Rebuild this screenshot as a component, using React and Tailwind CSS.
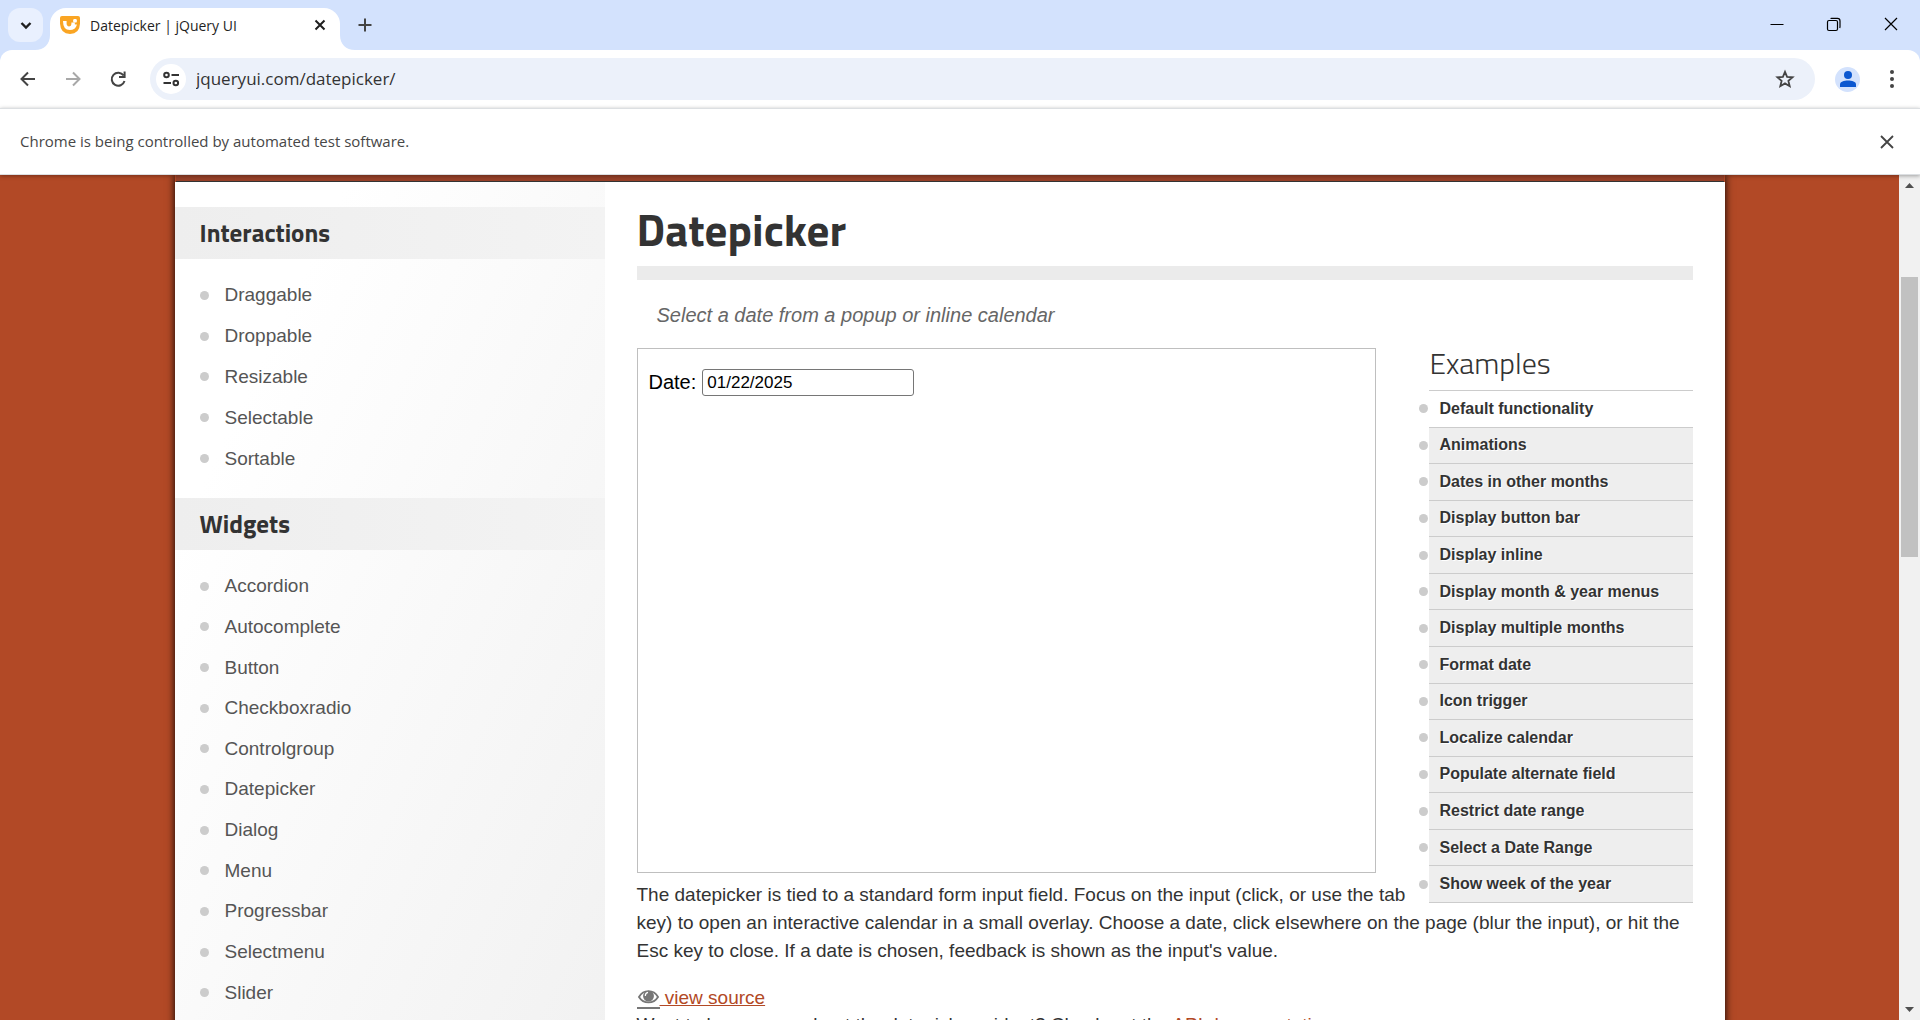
import React from "react";

const INTERACTIONS = ["Draggable", "Droppable", "Resizable", "Selectable", "Sortable"];
const WIDGETS = [
  "Accordion", "Autocomplete", "Button", "Checkboxradio", "Controlgroup", "Datepicker",
  "Dialog", "Menu", "Progressbar", "Selectmenu", "Slider",
];
const EXAMPLES = [
  "Default functionality", "Animations", "Dates in other months", "Display button bar",
  "Display inline", "Display month & year menus", "Display multiple months", "Format date",
  "Icon trigger", "Localize calendar", "Populate alternate field", "Restrict date range",
  "Select a Date Range", "Show week of the year",
];

function Stroke({ d, className = "", size = 20, width = 2 }) {
  return (
    <svg className={className} width={size} height={size} viewBox={`0 0 ${size} ${size}`} fill="none" stroke="currentColor" strokeWidth={width} aria-hidden="true">
      <path d={d} />
    </svg>
  );
}

function TabStrip() {
  return (
    <div className="flex h-[50px] items-start bg-[#d3e2fd]">
      <button aria-label="Search tabs" className="mt-2 ml-2 flex h-[34px] w-[35px] items-center justify-center rounded-xl bg-[#e9f0fe] text-[#1f1f1f]">
        <Stroke d="M5.5 8l4.500 4.500L14.500 8" width={2.4} />
      </button>
      <div className="ml-[-8px] flex h-[50px] items-end">
        <svg width="15" height="15" viewBox="0 0 15 15" fill="#fff" aria-hidden="true"><path d="M15 0v15H0C9 15 15 9 15 0z" /></svg>
        <div className="mt-2 flex h-[42px] w-[290px] items-center self-start rounded-t-2xl bg-white pr-[10px] pb-2 pl-[10px]">
          <svg width="20" height="18" viewBox="0 0 20 18" aria-hidden="true">
            <path d="M0 2Q0 0 2 0h16q2 0 2 2v5.500Q19.500 18 10 18T0 7.500z" fill="#faa523" />
            <path d="M3 5h3.600v2.600q0 2.800 2.500 2.800 2.300 0 2.300-2.400V6.500h3.400v1.700q1 .6 2.200.3-1.500 5.600-7.200 5.600Q3 14 3 5z" fill="#fff" />
            <rect x="13.200" y="3" width="3.600" height="3.600" rx="1.200" fill="#fff" />
          </svg>
          <span className="ml-[10px] flex-1 font-['Open_Sans',sans-serif] text-[14px] text-[#1f1f1f]">Datepicker | jQuery UI</span>
          <button aria-label="Close tab" className="text-[#1f1f1f]"><Stroke d="M5.500 5.500l9 9M14.500 5.500l-9 9" /></button>
        </div>
        <svg width="15" height="15" viewBox="0 0 15 15" fill="#fff" aria-hidden="true"><path d="M0 0v15h15C6 15 0 9 0 0z" /></svg>
      </div>
      <button aria-label="New tab" className="mt-[15px] text-[#444]"><Stroke d="M10 3.500v13M3.500 10h13" /></button>
      <div className="mt-[14px] mr-[19px] ml-auto flex gap-[37px] text-black">
        <button aria-label="Minimize"><Stroke d="M3.500 10.500h13" width={1} /></button>
        <button aria-label="Restore">
          <svg width="20" height="20" viewBox="0 0 20 20" fill="none" stroke="currentColor" strokeWidth="1.200" aria-hidden="true">
            <rect x="3.500" y="6.500" width="10" height="10" rx="1.500" />
            <path d="M6.500 4.500q.3-.1 1-.1h6q2.500 0 2.500 2.500v5.600q0 1-.3 1.500" />
          </svg>
        </button>
        <button aria-label="Close window"><Stroke d="M4 4l12 12M16 4L4 16" width={1.2} /></button>
      </div>
    </div>
  );
}

function Toolbar() {
  return (
    <div className="bg-[#d3e2fd]">
      <div className="flex h-[58px] items-center rounded-t-xl bg-white pr-[18px] pl-[18px] text-[#444]">
        <button aria-label="Back"><Stroke d="M17 10H4M10 3.500L3.500 10l6.500 6.500" /></button>
        <button aria-label="Forward" className="ml-[25px] text-[#a8a8a8]"><Stroke d="M3 10h13M10 3.500l6.500 6.500-6.500 6.500" /></button>
        <button aria-label="Reload" className="ml-[25px]"><Stroke d="M15.600 6.500A6.500 6.500 0 1 0 16.500 12M16.600 2.500v5.500H11" /></button>
        <div className="ml-[22px] flex h-[42px] flex-1 items-center rounded-full bg-[#ecf1fa] pr-5 pl-[6px]">
          <button aria-label="View site information" className="flex h-[30px] w-[30px] items-center justify-center rounded-full bg-white text-[#333]">
            <svg width="18" height="18" viewBox="0 0 18 18" fill="none" stroke="currentColor" strokeWidth="2" aria-hidden="true">
              <circle cx="4.500" cy="5" r="2.300" /><path d="M9.500 5H17M1.500 13H9" /><circle cx="13.800" cy="13" r="2.300" />
            </svg>
          </button>
          <input aria-label="Address and search bar" defaultValue="jqueryui.com/datepicker/" className="ml-[10px] min-w-0 flex-1 bg-transparent font-['Open_Sans',sans-serif] text-[17px] text-[#333] outline-none" />
          <button aria-label="Bookmark this tab">
            <svg width="20" height="20" viewBox="0 0 20 20" fill="none" stroke="currentColor" strokeWidth="1.800" aria-hidden="true">
              <path d="M10 2.800l2.100 5 5.500.5-4.200 3.600 1.300 5.300-4.700-2.800-4.700 2.800 1.300-5.300L2.400 8.300l5.500-.5z" />
            </svg>
          </button>
        </div>
        <button aria-label="Profile" className="ml-5 flex h-[25px] w-[25px] items-center justify-center rounded-full bg-[#d3e2fd]">
          <svg width="16" height="16" viewBox="0 0 16 16" fill="#0b57d0" aria-hidden="true"><circle cx="8" cy="4" r="4" /><path d="M0 16v-2.500C0 10.500 4 9.500 8 9.500s8 1 8 4V16z" /></svg>
        </button>
        <button aria-label="Menu" className="ml-[22px]">
          <svg width="20" height="20" viewBox="0 0 20 20" fill="currentColor" aria-hidden="true"><circle cx="10" cy="3" r="2" /><circle cx="10" cy="10" r="2" /><circle cx="10" cy="17" r="2" /></svg>
        </button>
      </div>
    </div>
  );
}

function InfoBar() {
  return (
    <div className="z-10 flex h-[67px] items-center justify-between border-y border-[#dcdfe2] bg-white pr-[23px] pl-5 shadow-[0_1px_4px_rgba(0,0,0,0.35)]">
      <p className="font-['Open_Sans',sans-serif] text-[15px] text-[#474747]">Chrome is being controlled by automated test software.</p>
      <button aria-label="Dismiss" className="text-[#444]"><Stroke d="M4 4l12 12M16 4L4 16" width={1.8} /></button>
    </div>
  );
}

function SideSection({ title, items, listClass }) {
  return (
    <section>
      <h3 className="flex h-[52px] items-center bg-linear-to-r from-[#eee] to-[#f3f3f3] pt-[2px] pl-[25px] font-['Titillium_Web','Roboto',sans-serif] text-[25px] font-bold text-[#333]">{title}</h3>
      <ul className={`grid auto-rows-fr pt-4 pl-[25px] ${listClass}`}>
        {items.map((t) => (
          <li key={t} className="flex items-center">
            <span className="h-[9px] w-[9px] rounded-full bg-[#ccc]" />
            <a href="#" className="ml-4 text-[19px] leading-6 text-[#555]">{t}</a>
          </li>
        ))}
      </ul>
    </section>
  );
}

function Examples() {
  return (
    <aside className="float-right ml-5 w-[264px]">
      <h2 className="h-[42px] pl-px font-['Titillium_Web','Open_Sans',sans-serif] text-[30px] leading-[30px] font-light text-[#333]">Examples</h2>
      <ul className="grid h-[513px] auto-rows-fr border-b border-[#ccc]">
        {EXAMPLES.map((t, i) => (
          <li key={t} className={`relative flex items-center border-t border-[#ccc] pl-[11px] ${i === 0 ? "bg-white" : "bg-[#eee]"}`}>
            <span className="absolute -left-[10px] h-[9px] w-[9px] rounded-full bg-[#ccc]" />
            <a href="#" className="text-[16px] font-bold text-[#333] [text-shadow:1px_1px_0_#fff]">{t}</a>
          </li>
        ))}
      </ul>
    </aside>
  );
}

function Scrollbar() {
  return (
    <div className="flex w-[21px] shrink-0 flex-col items-center bg-[#f1f1f1] pt-2 pb-2">
      <svg width="9" height="5" viewBox="0 0 9 5" fill="#505050" aria-hidden="true"><path d="M0 5l4.500-5L9 5z" /></svg>
      <div className="mt-[89px] h-[280px] w-[17px] bg-[#c1c1c1]" />
      <svg className="mt-auto" width="9" height="5" viewBox="0 0 9 5" fill="#505050" aria-hidden="true"><path d="M0 0l4.500 5L9 0z" /></svg>
    </div>
  );
}

export default function App() {
  return (
    <div className="flex h-screen flex-col overflow-hidden bg-white font-['Liberation_Sans',Arial,sans-serif]">
      <TabStrip />
      <Toolbar />
      <InfoBar />
      <div className="flex min-h-0 flex-1">
        <div className="min-w-0 flex-1 overflow-hidden bg-[#b24926]">
          <div className="mx-auto max-w-[1550px] shadow-[0_0_8px_#000]">
            <div className="mx-px h-[7px] border-b border-[#333] bg-[#964028]" />
            <div className="flex bg-white">
              <nav className="w-[430px] shrink-0 bg-linear-to-br from-white from-20% to-[#f1f1f1] pt-[25px] pb-16">
                <SideSection title="Interactions" items={INTERACTIONS} listClass="mb-[19px] h-[220px]" />
                <SideSection title="Widgets" items={WIDGETS} listClass="h-[463px]" />
              </nav>
              <main className="min-w-0 flex-1 pt-[22px] pr-8 pl-8 text-[#333]">
                <h1 className="h-[62px] font-['Titillium_Web','Roboto',sans-serif] text-[45px] leading-[50px] font-bold">Datepicker</h1>
                <div className="h-[14px] bg-[#ebebeb]" />
                <p className="mt-[21px] mb-[19px] pl-5 text-xl leading-7 text-[#666] italic">Select a date from a popup or inline calendar</p>
                <div>
                  <Examples />
                  <div className="mr-[317px] h-[525px] border border-[#bfbfbf] px-[11px] pt-[18px]">
                    <label className="flex items-center gap-[6px] text-xl text-black">
                      Date:
                      <input type="text" defaultValue="01/22/2025" className="mt-[2px] h-[27px] w-[212px] rounded-[3px] border border-[#767676] bg-white px-1 text-[17px]" />
                    </label>
                  </div>
                  <p className="mt-2 text-[19px] leading-7">
                    The datepicker is tied to a standard form input field. Focus on the input (click, or use the tab key) to open an interactive calendar in a small overlay. Choose a date, click elsewhere on the page (blur the input), or hit the Esc key to close. If a date is chosen, feedback is shown as the input's value.
                  </p>
                  <div className="mt-5 text-[19px] leading-7">
                    <a href="#" className="flex h-[26px] w-fit items-center text-[#b24926]">
                      <svg className="border-b-2 border-[#777]" width="23" height="22" viewBox="0 0 23 22" aria-hidden="true">
                        <path d="M1 11C6 2.500 17 2.500 22 11 17 19 6 19 1 11z" fill="#fff" stroke="#777" strokeWidth="2" />
                        <circle cx="11.500" cy="10" r="6" fill="#777" />
                        <path d="M8 10q0-3.500 3-4" fill="none" stroke="#fff" strokeWidth="1.300" />
                      </svg>
                      <span className="whitespace-pre underline"> view source</span>
                    </a>
                    <p>Want to learn more about the datepicker widget? Check out the <a href="#" className="text-[#b24926]">API documentation</a>.</p>
                  </div>
                </div>
              </main>
            </div>
          </div>
        </div>
        <Scrollbar />
      </div>
    </div>
  );
}
